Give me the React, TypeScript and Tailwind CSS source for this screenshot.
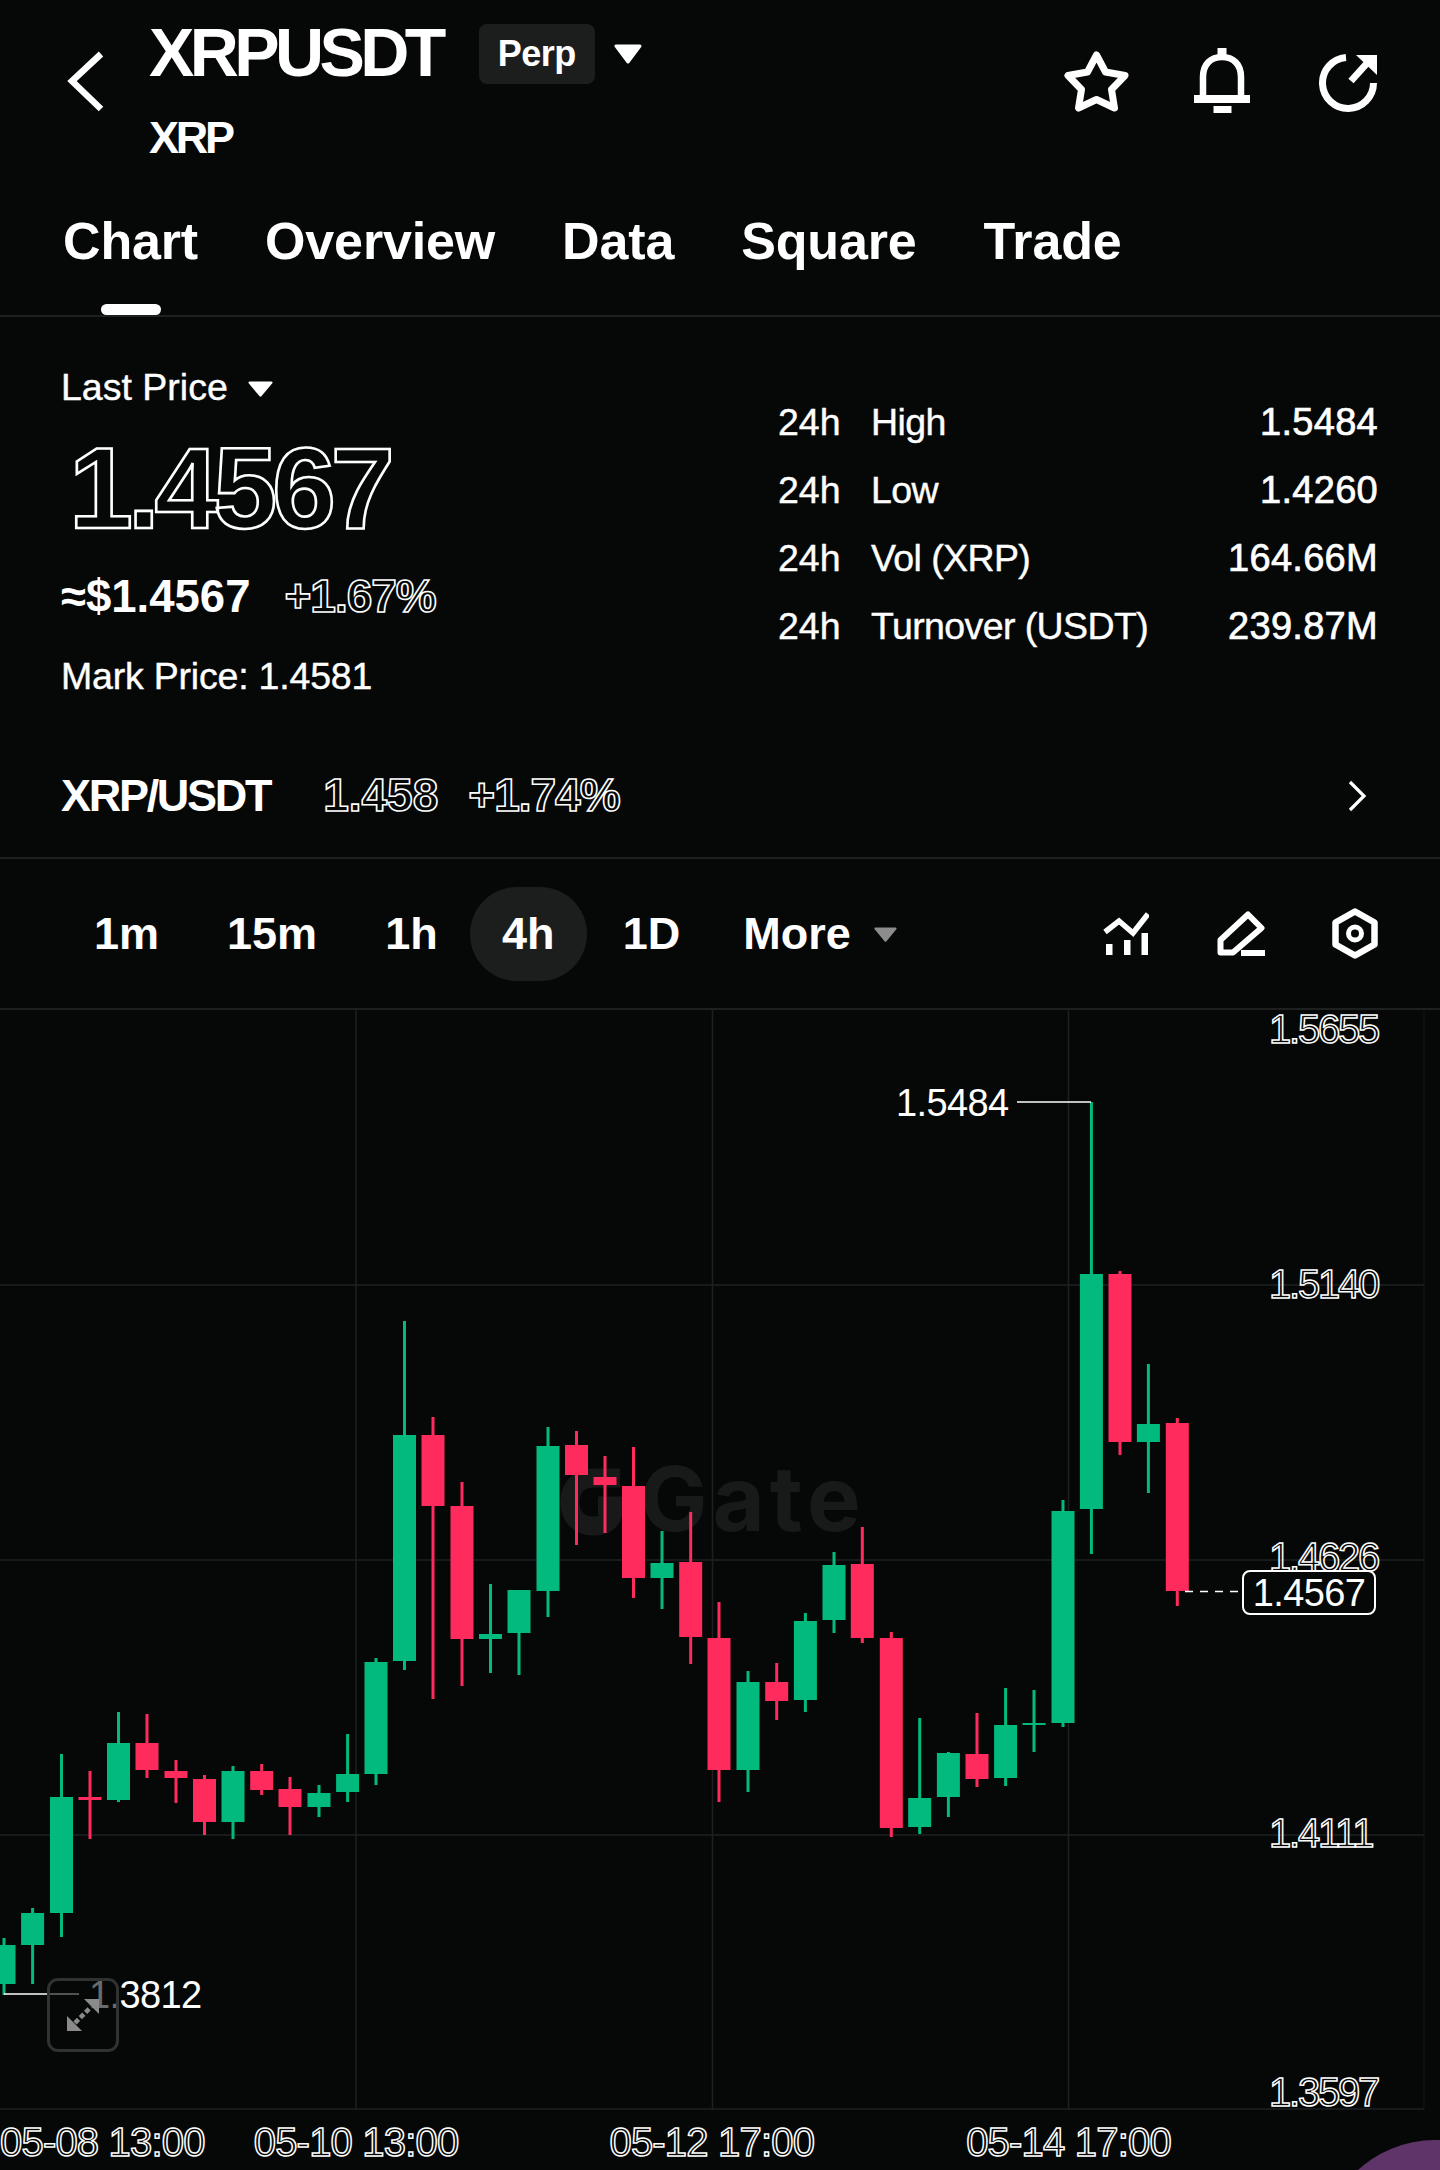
const axisLabel = "text-transparent [-webkit-text-stroke:1.5px_white] text-[40px] leading-[40px] tracking-[-2.2px] whitespace-nowrap";
const chartLabel = "text-white text-[38px] leading-[40px] tracking-[-0.6px] whitespace-nowrap";
const timeLabel = "text-transparent [-webkit-text-stroke:1.5px_white] text-[40px] leading-[40px] tracking-[-0.8px] whitespace-nowrap";
const changeLabel = "text-transparent [-webkit-text-stroke:1.6px_white] font-bold text-[46px] leading-[45px] whitespace-nowrap";

// x, wick top, body top, body bottom, wick bottom, up
const candles: [number, number, number, number, number, boolean][] = [
  [4, 1938, 1945, 1984, 1995, true],
  [32.6, 1908, 1913, 1945, 1984, true],
  [61.5, 1754, 1797, 1913, 1937, true],
  [90, 1771, 1797, 1800, 1839, false],
  [118.5, 1712, 1743, 1800, 1802, true],
  [147, 1714, 1743, 1770, 1778, false],
  [176, 1760, 1771, 1778, 1803, false],
  [204.5, 1775, 1779, 1822, 1835, false],
  [233, 1766, 1771, 1822, 1839, true],
  [261.7, 1764, 1771, 1790, 1795, false],
  [290, 1777, 1789, 1807, 1835, false],
  [319, 1785, 1793, 1807, 1817, true],
  [347.6, 1734, 1774, 1792, 1802, true],
  [376, 1658, 1662, 1774, 1785, true],
  [404.5, 1321, 1435, 1661, 1670, true],
  [433, 1417, 1435, 1506, 1699, false],
  [462, 1482, 1506, 1639, 1686, false],
  [490.5, 1584, 1634, 1639, 1673, true],
  [519, 1590, 1590, 1633, 1675, true],
  [548, 1427, 1446, 1591, 1617, true],
  [576.5, 1431, 1445, 1475, 1545, false],
  [605, 1456, 1477, 1485, 1533, false],
  [633.5, 1447, 1486, 1578, 1598, false],
  [662, 1531, 1563, 1578, 1609, true],
  [690.7, 1512, 1562, 1637, 1664, false],
  [719, 1602, 1638, 1770, 1802, false],
  [748, 1671, 1682, 1770, 1792, true],
  [776.7, 1663, 1682, 1701, 1720, false],
  [805.4, 1613, 1621, 1700, 1712, true],
  [834, 1552, 1565, 1620, 1633, true],
  [862.3, 1527, 1564, 1638, 1643, false],
  [891.3, 1632, 1638, 1828, 1837, false],
  [919.7, 1718, 1798, 1827, 1834, true],
  [948.4, 1752, 1753, 1797, 1817, true],
  [977, 1713, 1754, 1779, 1787, false],
  [1005.6, 1688, 1725, 1778, 1786, true],
  [1034, 1690, 1723, 1725, 1752, true],
  [1063, 1500, 1511, 1723, 1727, true],
  [1091.4, 1102, 1274, 1509, 1554, true],
  [1120, 1271, 1274, 1442, 1455, false],
  [1148.4, 1364, 1424, 1442, 1493, true],
  [1177.3, 1418, 1423, 1591, 1606, false],
];

function Caret({ color = "white", w, h }: { color?: string; w: number; h: number }) {
  return (
    <svg width={w} height={h} viewBox="0 0 28 20" preserveAspectRatio="none">
      <polygon points="2,2 26,2 14,18" fill={color} stroke={color} strokeWidth="3" strokeLinejoin="round" />
    </svg>
  );
}

function Header() {
  return (
    <header className="h-[317px] border-b-2 border-[#1e2020] flex flex-col">
      <div className="flex h-[215px] items-start">
        <svg className="ml-[67px] mt-[51px]" width="37" height="61" viewBox="0 0 37 61" fill="none">
          <polyline points="34,3 5,30 34,58" stroke="white" strokeWidth="6.5" />
        </svg>
        <div className="ml-[45px] pt-[18px] flex flex-col">
          <div className="flex items-start">
            <span className="text-[68px] leading-[68px] font-bold tracking-[-4.6px]">XRPUSDT</span>
            <span className="ml-[37px] mt-[6px] w-[116px] h-[60px] rounded-[8px] bg-[#1c1e1e] flex items-center justify-center text-[36px] font-bold tracking-[-0.5px]">
              Perp
            </span>
            <span className="ml-[19px] mt-[26px]"><Caret w={28} h={20} /></span>
          </div>
          <span className="mt-[29px] text-[45px] leading-[45px] font-bold tracking-[-3.2px]">XRP</span>
        </div>
        <div className="ml-auto mr-[62px] mt-[48px] flex items-start">
          <svg className="mt-[2px]" width="66" height="63" viewBox="0 0 66 63" fill="none">
            <path d="M32.5 5 L41.5 22 L61 25.5 L47.5 39.5 L50.5 58 L32.5 49.5 L14.5 58 L17.5 39.5 L4 25.5 L23.5 22 Z" stroke="white" strokeWidth="7" strokeLinejoin="round" />
          </svg>
          <svg className="ml-[64px]" width="56" height="65" viewBox="0 0 56 65" fill="none">
            <rect x="23.5" y="0" width="9" height="10" fill="white" />
            <path d="M9 48 V29 C9 16 17 9 28 9 C39 9 47 16 47 29 V48" stroke="white" strokeWidth="6.5" />
            <rect x="0" y="47" width="56" height="8" fill="white" />
            <rect x="19.5" y="58" width="18" height="7" fill="white" />
          </svg>
          <svg className="ml-[69px] mt-[5px]" width="59" height="59" viewBox="0 0 59 59" fill="none">
            <path d="M27 4.5 A25.5 25.5 0 1 0 54.5 30" stroke="white" strokeWidth="7" />
            <path d="M32 28 L50 8" stroke="white" strokeWidth="7" />
            <polygon points="37,2 58,2 58,22" fill="white" />
          </svg>
        </div>
      </div>
      <nav className="flex items-start gap-[67px] pl-[63px] text-[52px] leading-[52px] font-bold tracking-[-0.15px]">
        <div className="flex flex-col items-center">
          <span>Chart</span>
          <span className="mt-[37px] w-[60px] h-[11px] rounded-full bg-white" />
        </div>
        <span>Overview</span>
        <span>Data</span>
        <span>Square</span>
        <span>Trade</span>
      </nav>
    </header>
  );
}

function StatRow({ label, value }: { label: string; value: string }) {
  return (
    <div className="flex h-[37px] items-center leading-[37px] whitespace-nowrap">
      <span className="w-[93px] [-webkit-text-stroke:0.4px_white]">24h</span>
      <span className="tracking-[-0.6px] [-webkit-text-stroke:0.4px_white]">{label}</span>
      <span className="ml-auto text-[38px] tracking-[0.3px] [-webkit-text-stroke:0.7px_white]">{value}</span>
    </div>
  );
}

function PriceInfo() {
  return (
    <section className="h-[542px] border-b-2 border-[#1e2020] pl-[61px] pr-[62px] text-[37.5px] leading-[37px]">
      <div className="flex h-[378px] items-start">
        <div className="pt-[52px] flex flex-col items-start">
          <div className="flex items-center h-[37px]">
            <span className="[-webkit-text-stroke:0.4px_white]">Last Price</span>
            <span className="ml-[20px] mt-[3px]"><Caret w={25} h={16} /></span>
          </div>
          <div className="mt-[25px] ml-[8px] text-transparent [-webkit-text-stroke:2.6px_white] font-bold text-[115px] leading-[115px] tracking-[-5.2px] whitespace-nowrap">
            1.4567
          </div>
          <div className="mt-[28px] flex items-baseline">
            <span className="text-[45.5px] leading-[45px] font-bold">≈$1.4567</span>
            <span className={`ml-[34px] tracking-[-1px] ${changeLabel}`}>+1.67%</span>
          </div>
          <div className="mt-[39px] whitespace-nowrap tracking-[-0.2px] [-webkit-text-stroke:0.4px_white]">Mark Price: 1.4581</div>
        </div>
        <div className="ml-auto w-[600px] pt-[87px] flex flex-col gap-[31px]">
          <StatRow label="High" value="1.5484" />
          <StatRow label="Low" value="1.4260" />
          <StatRow label="Vol (XRP)" value="164.66M" />
          <StatRow label="Turnover (USDT)" value="239.87M" />
        </div>
      </div>
      <div className="mt-[78px] flex items-baseline">
        <span className="text-[45px] leading-[45px] font-bold tracking-[-2.3px]">XRP/USDT</span>
        <span className={`ml-[53px] ${changeLabel}`}>1.458</span>
        <span className={`ml-[30px] tracking-[-1px] ${changeLabel}`}>+1.74%</span>
        <svg className="ml-auto mr-[11px] self-center" width="20" height="32" viewBox="0 0 20 32" fill="none">
          <polyline points="3,2 17,16 3,30" stroke="white" strokeWidth="3.2" />
        </svg>
      </div>
    </section>
  );
}

function Toolbar() {
  return (
    <section className="h-[151px] border-b-2 border-[#1e2020] flex items-center text-[45px] leading-[45px] font-bold pl-[94px]">
      <span>1m</span>
      <span className="ml-[68px]">15m</span>
      <span className="ml-[68px]">1h</span>
      <span className="ml-[32px] w-[117px] h-[94px] rounded-full bg-[#1c1e1e] flex items-center justify-center">4h</span>
      <span className="ml-[36px]">1D</span>
      <span className="ml-[63px]">More</span>
      <span className="ml-[23px] mt-[2px]"><Caret color="#8c8c8c" w={23} h={15} /></span>
      <svg className="ml-[206px]" width="46" height="45" viewBox="0 0 46 45" fill="none">
        <polyline points="2,21 16,10 30,22 45,3" stroke="white" strokeWidth="5.5" />
        <rect x="3" y="33" width="6.5" height="11" fill="white" />
        <rect x="21" y="29" width="6.5" height="15" fill="white" />
        <rect x="38.5" y="22" width="6.5" height="22" fill="white" />
      </svg>
      <svg className="ml-[68px]" width="48" height="45" viewBox="0 0 48 45" fill="none">
        <path d="M3.5 41.5 V29 L31 3.5 L44.5 17 L16 41.5 Z" stroke="white" strokeWidth="6" strokeLinejoin="round" />
        <rect x="24" y="39" width="24" height="6" fill="white" />
      </svg>
      <svg className="ml-[67px]" width="46" height="51" viewBox="0 0 46 51" fill="none">
        <polygon points="23,3.5 42.5,14.5 42.5,36.5 23,47.5 3.5,36.5 3.5,14.5" stroke="white" strokeWidth="6.5" strokeLinejoin="round" />
        <circle cx="23" cy="25.5" r="6.5" stroke="white" strokeWidth="5" />
      </svg>
    </section>
  );
}

function Chart() {
  return (
    <div className="relative h-[1100px]">
      {/* watermark */}
      <svg className="absolute left-[560px] top-[458px]" width="76" height="68" viewBox="0 0 76 68" fill="none">
        <path d="M60 10 H34 C18 10 10 20 10 34 C10 48 18 58 34 58 C48 58 54 50 54 38 H38" stroke="#181a1a" strokeWidth="19" />
      </svg>
      <span className="absolute left-[640px] top-[434px] font-['Inter'] text-[90px] leading-[110px] font-bold tracking-[5px] text-[#181a1a]">Gate</span>

      <svg className="absolute inset-0" width="1440" height="1100" viewBox="0 1010 1440 1100">
        {[356, 712.5, 1068.5].map((x) => (
          <line key={x} x1={x} x2={x} y1="1010" y2="2110" stroke="#1e2020" strokeWidth="1.5" />
        ))}
        <line x1="1424" x2="1424" y1="1010" y2="2110" stroke="#101212" strokeWidth="1.5" />
        {[1285, 1560, 1835, 2109].map((y) => (
          <line key={y} x1="0" x2="1424" y1={y} y2={y} stroke="#1e2020" strokeWidth="1.5" />
        ))}
        {candles.map(([x, wickTop, top, bottom, wickBottom, up]) => {
          const color = up ? "#02ba7e" : "#ff2b5c";
          return (
            <g key={x} fill={color}>
              <rect x={x - 1.5} y={wickTop} width="3" height={wickBottom - wickTop} />
              <rect x={x - 11.5} y={top} width="23" height={bottom - top} />
            </g>
          );
        })}
        <line x1="1017" x2="1091" y1="1102" y2="1102" stroke="white" strokeWidth="1.5" />
        <line x1="1185" x2="1242" y1="1591.5" y2="1591.5" stroke="white" strokeWidth="1.5" strokeDasharray="8 7" />
        <line x1="4" x2="79" y1="1994" y2="1994" stroke="white" strokeWidth="1.5" />
      </svg>

      <span className={`absolute left-[1269px] top-[-1px] ${axisLabel}`}>1.5655</span>
      <span className={`absolute left-[1269px] top-[254px] ${axisLabel}`}>1.5140</span>
      <span className={`absolute left-[1269px] top-[527px] ${axisLabel}`}>1.4626</span>
      <span className={`absolute left-[1269px] top-[803px] ${axisLabel}`}>1.4111</span>
      <span className={`absolute left-[1269px] top-[1062px] ${axisLabel}`}>1.3597</span>

      <span className={`absolute left-[896px] top-[73px] ${chartLabel}`}>1.5484</span>
      <span className={`absolute left-[89px] top-[965px] ${chartLabel}`}>1.3812</span>

      <div className={`absolute left-[1242px] top-[560px] w-[134px] h-[45px] rounded-[8px] border-2 border-white bg-[#060808] flex items-center justify-center ${chartLabel}`}>
        1.4567
      </div>

      <div className="absolute left-[47px] top-[968px] w-[72px] h-[74px] rounded-[11px] border-[3px] border-[#303232] bg-[#060808]/60 flex items-center justify-center">
        <svg width="36" height="36" viewBox="0 0 36 36" fill="none">
          <polygon points="19,2 34,2 34,17" fill="#8a8a8a" />
          <polygon points="2,19 2,34 17,34" fill="#8a8a8a" />
          <line x1="10" y1="26" x2="26" y2="10" stroke="#8a8a8a" strokeWidth="4.5" strokeDasharray="5 2.5" />
        </svg>
      </div>
    </div>
  );
}

export default function App() {
  return (
    <main className="relative w-[1440px] h-[2170px] overflow-hidden bg-[#060808] text-white font-['Liberation_Sans',sans-serif]">
      <Header />
      <PriceInfo />
      <Toolbar />
      <Chart />
      <div className="pt-[12px] flex">
        <span className={`${timeLabel}`}>05-08 13:00</span>
        <span className={`ml-[49px] ${timeLabel}`}>05-10 13:00</span>
        <span className={`ml-[151px] ${timeLabel}`}>05-12 17:00</span>
        <span className={`ml-[152px] ${timeLabel}`}>05-14 17:00</span>
      </div>
      <div className="absolute left-[1321px] top-[2140px] w-[228px] h-[228px] rounded-full bg-[#5f3468]" />
    </main>
  );
}
